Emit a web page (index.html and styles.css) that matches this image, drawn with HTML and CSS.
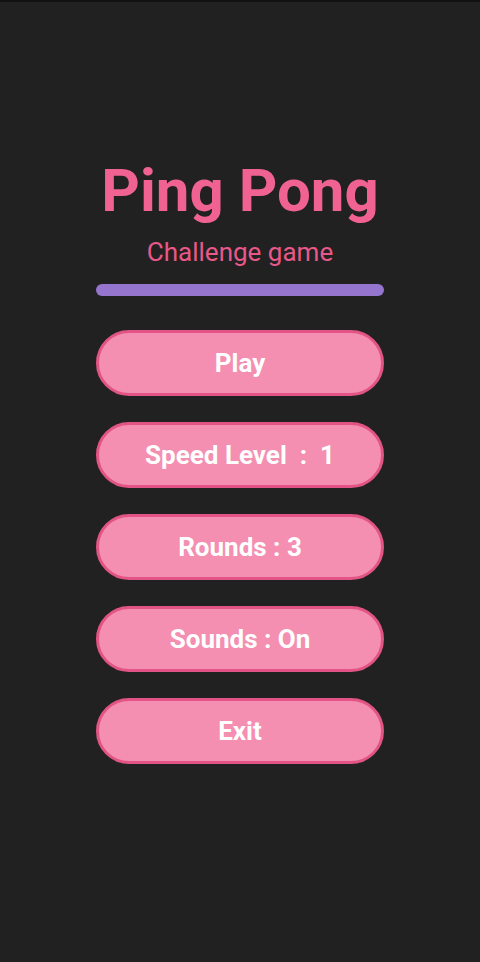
FILE: index.html
```html
<!DOCTYPE html>
<html>
<head>
<meta charset="utf-8">
<link rel="stylesheet" href="styles.css">
</head>
<body>
<main class="menu">
  <h1 class="title">Ping Pong</h1>
  <p class="subtitle">Challenge game</p>
  <div class="bar"></div>
  <div class="buttons">
    <button class="btn">Play</button>
    <button class="btn">Speed Level&nbsp; : &nbsp;1</button>
    <button class="btn">Rounds : 3</button>
    <button class="btn">Sounds : On</button>
    <button class="btn">Exit</button>
  </div>
</main>
</body>
</html>
```
FILE: styles.css
```css
html, body {
  margin: 0;
  padding: 0;
}
body {
  background: #212121;
  border-top: 2px solid #121212;
  min-height: 960px;
  font-family: Roboto, "Noto Sans", sans-serif;
}
.menu {
  display: flex;
  flex-direction: column;
  align-items: center;
  padding-top: 159px;
}
.title {
  margin: 0;
  font-size: 60px;
  line-height: 60px;
  font-weight: 700;
  color: #f06292;
}
.subtitle {
  margin: 16px 0 0;
  font-size: 26px;
  line-height: 30px;
  font-weight: 400;
  color: #e85888;
}
.bar {
  margin-top: 17px;
  width: 288px;
  height: 12px;
  border-radius: 6px;
  background: #9575cd;
}
.buttons {
  margin-top: 34px;
  display: flex;
  flex-direction: column;
  gap: 26px;
}
.btn {
  width: 288px;
  height: 66px;
  border: 3px solid #e25486;
  border-radius: 33px;
  background: #f48fb1;
  color: #ffffff;
  font-family: Roboto, "Noto Sans", sans-serif;
  font-size: 26px;
  font-weight: 700;
  padding: 0;
  white-space: pre;
}
```
